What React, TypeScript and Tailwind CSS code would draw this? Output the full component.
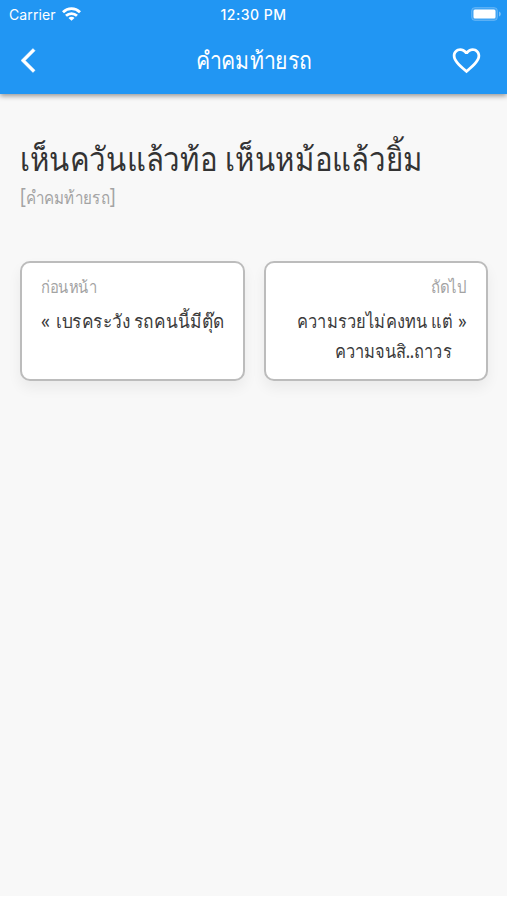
import React from 'react';

type QuoteCardProps = {
    label: string;
    align: 'left' | 'right';
    children: React.ReactNode;
};

const StatusBar: React.FC = () => (
    <div className="h-[27px] px-[9px] grid grid-cols-3 items-center leading-[27px]">
        <div className="flex items-center gap-[6px]">
            <span className="text-[14px] tracking-[0.1px] pt-px">Carrier</span>
            <svg width="19" height="14" viewBox="0 0 19 14" fill="none" stroke="white" strokeWidth="2.8">
                <path d="M1 5.2C5.8.5 13.2.5 18 5.2" />
                <path d="M4 8.8c3.2-3 7.8-3 11 0" />
                <path d="M9.5 13.8 6.5 11c1.6-1.7 4.4-1.7 6 0z" fill="white" stroke="none" />
            </svg>
        </div>
        <span className="text-center font-medium tracking-[0.5px] text-[14px] pt-px">12:30 PM</span>
        <svg className="justify-self-end -mr-[4px] -mt-px" width="31" height="14" viewBox="0 0 31 14">
            <rect x="0.5" y="0.5" width="26" height="13" rx="3.5" fill="white" fillOpacity="0.15" stroke="white" strokeOpacity="0.2" />
            <rect x="2.5" y="2.5" width="22" height="9" rx="1.5" fill="white" />
            <path d="M28 4.5c2.4.8 2.4 4.2 0 5z" fill="white" fillOpacity="0.4" />
        </svg>
    </div>
);

const QuoteCard: React.FC<QuoteCardProps> = ({ label, align, children }) => (
    <div
        className={`h-[120px] bg-white border-2 border-[#bcbcbc] rounded-[10px] shadow-[0_7px_14px_rgba(0,0,0,0.06)] px-[19px] pt-[9px] ${align === 'right' ? 'text-right' : 'text-left'}`}
    >
        <div className="h-[30px] leading-[30px] text-[17px] text-[#a3a3a3]">
            <span className={`inline-block ${align === 'right' ? 'origin-right scale-x-[0.88]' : 'origin-left scale-x-[0.87]'}`}>{label}</span>
        </div>
        <div className={`mt-[4px] flex leading-[30px] text-[19px] text-[#3a3a3a] whitespace-nowrap ${align === 'right' ? 'justify-end' : ''}`}>
            {children}
        </div>
    </div>
);

const App: React.FC = () => (
    <div className="h-[900px] bg-white">
        <div className="h-[896px] bg-[#f8f8f8] font-['Noto_Sans',sans-serif]">
            {/* App bar */}
            <header className="h-[94px] bg-[#2196f3] text-white shadow-[0_2px_5px_rgba(0,0,0,0.4)] font-[Inter,'Noto_Sans',sans-serif]">
                <StatusBar />
                <div className="h-[66px] grid grid-cols-[100px_1fr_100px] items-center">
                    <svg className="ml-[21px]" width="29" height="29" viewBox="0 0 24 24" fill="white" stroke="white" strokeWidth="0.4">
                        <path d="M11.67 3.87L9.9 2.1 0 12l9.9 9.9 1.77-1.77L3.54 12z" />
                    </svg>
                    <h1 className="text-center text-[24px] leading-[40px] -mt-px font-['Noto_Sans',sans-serif] whitespace-nowrap">
                        <span className="inline-block scale-x-[0.885]">คำคมท้ายรถ</span>
                    </h1>
                    <svg className="justify-self-end mr-[24px]" width="33" height="33" viewBox="0 0 24 24" fill="white">
                        <path d="M16.5 3c-1.74 0-3.41.81-4.5 2.09C10.91 3.81 9.24 3 7.5 3 4.42 3 2 5.42 2 8.5c0 3.78 3.4 6.86 8.55 11.54L12 21.35l1.45-1.32C18.6 15.36 22 12.28 22 8.5 22 5.42 19.58 3 16.5 3zm-4.4 15.55l-.1.1-.1-.1C7.14 14.24 4 11.39 4 8.5 4 6.5 5.5 5 7.5 5c1.54 0 3.04.99 3.57 2.36h1.87C13.46 5.99 14.96 5 16.5 5c2 0 3.5 1.5 3.5 3.5 0 2.89-3.14 5.74-7.9 10.05z" />
                    </svg>
                </div>
            </header>

            {/* Current quote */}
            <main className="pl-[20px] pr-[19px] pt-[40px]">
                <h2 className="h-[50px] leading-[50px] text-[33px] text-[#333] whitespace-nowrap">
                    <span className="inline-block origin-left scale-x-[0.891]">เห็นควันแล้วท้อ เห็นหม้อแล้วยิ้ม</span>
                </h2>
                <p className="h-[28px] leading-[28px] -mt-px text-[18px] text-[#a3a3a3]">
                    <span className="inline-block origin-left scale-x-[0.84]">
                        <span className="text-[21px] leading-none">[</span>
                        คำคมท้ายรถ
                        <span className="text-[21px] leading-none">]</span>
                    </span>
                </p>

                {/* Previous / next */}
                <div className="mt-[50px] grid grid-cols-2 gap-[19px]">
                    <QuoteCard label="ก่อนหน้า" align="left">
                        <span className="inline-block origin-left scale-x-[0.91]">
                            <span className="mr-[2px]">«</span> เบรคระวัง รถคนนี้มีตุ๊ด
                        </span>
                    </QuoteCard>
                    <QuoteCard label="ถัดไป" align="right">
                        <span className="inline-block origin-right scale-x-[0.865]">
                            ความรวยไม่คงทน แต่ <span className="ml-[2px]">»</span>
                            <br />
                            <span className="mr-[18px] tracking-[-0.3px]">ความจนสิ..ถาวร</span>
                        </span>
                    </QuoteCard>
                </div>
            </main>
        </div>
    </div>
);

export default App;
